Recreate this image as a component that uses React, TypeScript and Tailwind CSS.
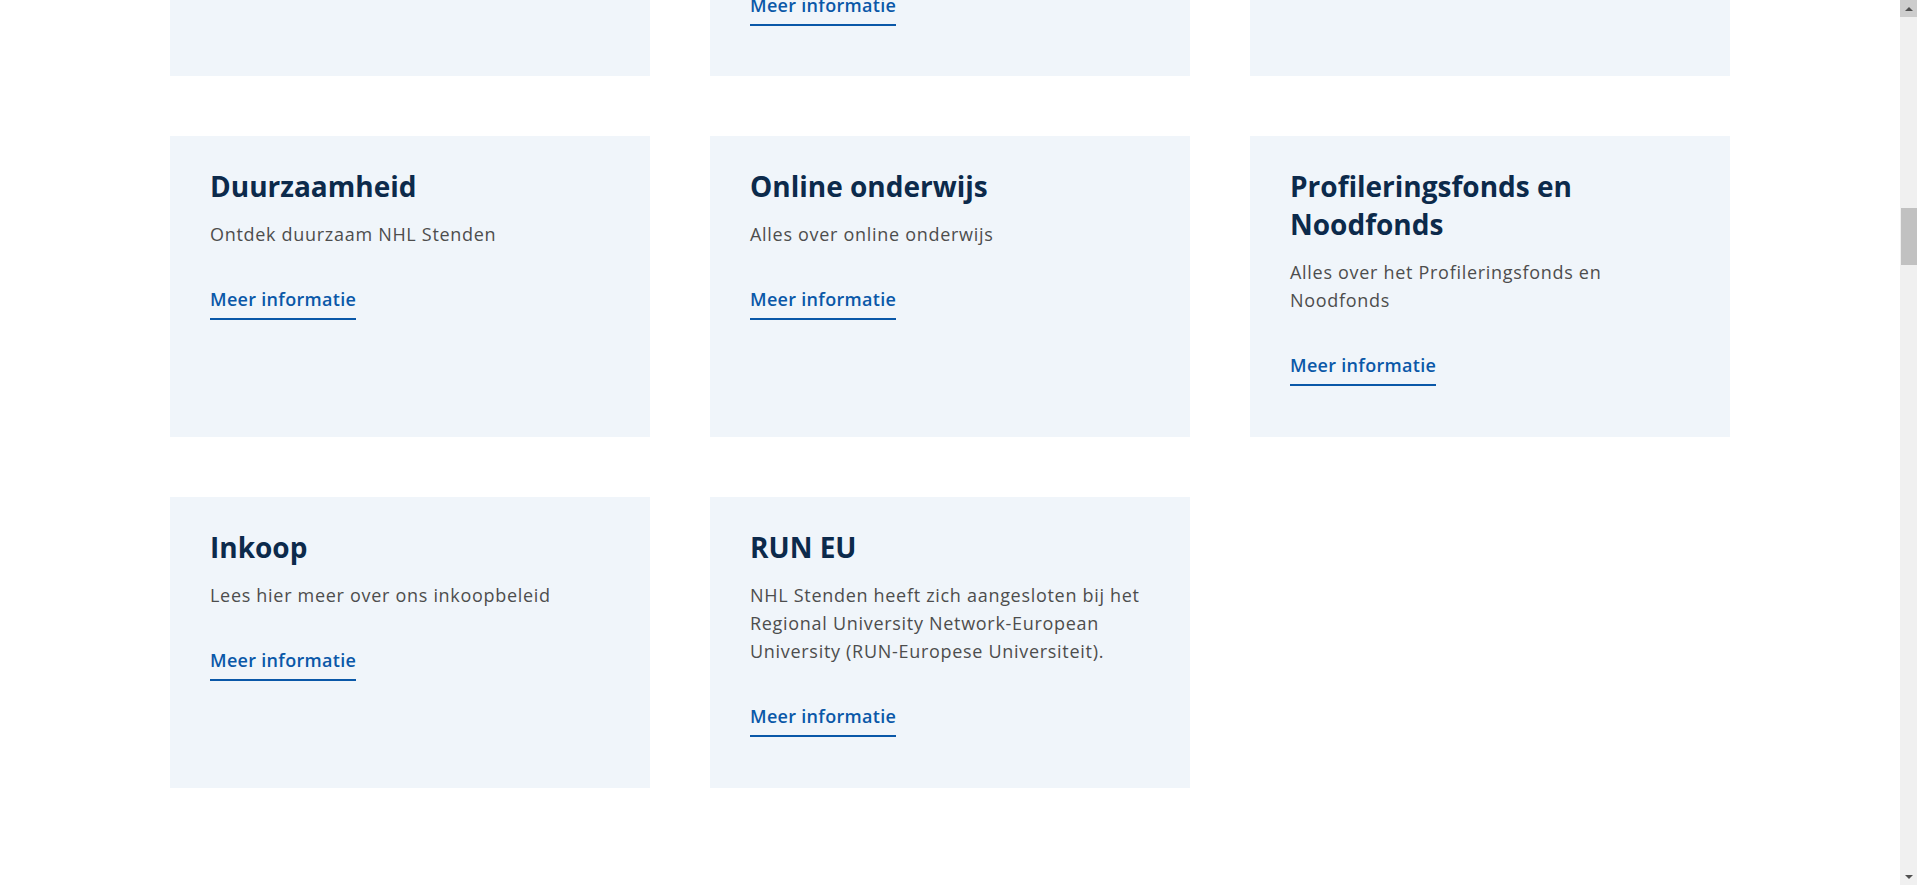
type Card = {
  title?: string;
  text?: string;
};

const rows: Card[][] = [
  [
    { title: 'Duurzaamheid', text: 'Ontdek duurzaam NHL Stenden' },
    { title: 'Online onderwijs', text: 'Alles over online onderwijs' },
    {
      title: 'Profileringsfonds en Noodfonds',
      text: 'Alles over het Profileringsfonds en Noodfonds',
    },
  ],
  [
    { title: 'Inkoop', text: 'Lees hier meer over ons inkoopbeleid' },
    {
      title: 'RUN EU',
      text: 'NHL Stenden heeft zich aangesloten bij het Regional University Network-European University (RUN-Europese Universiteit).',
    },
  ],
];

function MoreLink() {
  return (
    <a
      href="#"
      className="inline-block self-start border-b-2 border-[#0a58a8] pb-[5px] text-[18px] font-semibold leading-[28px] tracking-[0.3px] text-[#0a58a8]"
    >
      Meer informatie
    </a>
  );
}

function InfoCard({ title, text }: Card) {
  return (
    <div className="flex flex-col bg-[#f0f5fa] px-10 pt-[31px] pb-[51px]">
      <h3 className="text-[28px] font-bold leading-[38px] text-[#0c2a4b]">{title}</h3>
      <p className="mt-[15px] text-[18px] leading-[28px] tracking-[0.7px] text-[#4d4d4d]">
        {text}
      </p>
      <div className="mt-[37px] flex">
        <MoreLink />
      </div>
    </div>
  );
}

function Scrollbar() {
  return (
    <div className="sticky top-0 flex h-screen w-[17px] shrink-0 flex-col bg-[#f0f0f0]">
      <div className="flex h-[17px] items-center justify-center bg-[#cdcdcd]">
        <div className="h-0 w-0 border-x-[4px] border-b-[4px] border-x-transparent border-b-[#505050]" />
      </div>
      <div className="h-[191px]" />
      <div className="ml-[1px] h-[57px] bg-[#c1c1c1]" />
      <div className="flex-1" />
      <div className="flex h-[17px] items-center justify-center">
        <div className="h-0 w-0 border-x-[4px] border-t-[4px] border-x-transparent border-t-[#505050]" />
      </div>
    </div>
  );
}

export default function App() {
  return (
    <div
      className="flex h-[885px] overflow-hidden bg-white"
      style={{ fontFamily: '"Open Sans", "Liberation Sans", sans-serif' }}
    >
      <main className="flex-1">
        <div className="mx-auto grid max-w-[1560px] grid-cols-3 gap-[60px]">
          <div className="h-[76px] bg-[#f0f5fa]" />
          <div className="flex h-[76px] flex-col justify-end bg-[#f0f5fa] px-10 pb-[50px]">
            <MoreLink />
          </div>
          <div className="h-[76px] bg-[#f0f5fa]" />
          {rows[0].map((c) => (
            <InfoCard key={c.title} {...c} />
          ))}
          {rows[1].map((c) => (
            <InfoCard key={c.title} {...c} />
          ))}
        </div>
      </main>
      <Scrollbar />
    </div>
  );
}
